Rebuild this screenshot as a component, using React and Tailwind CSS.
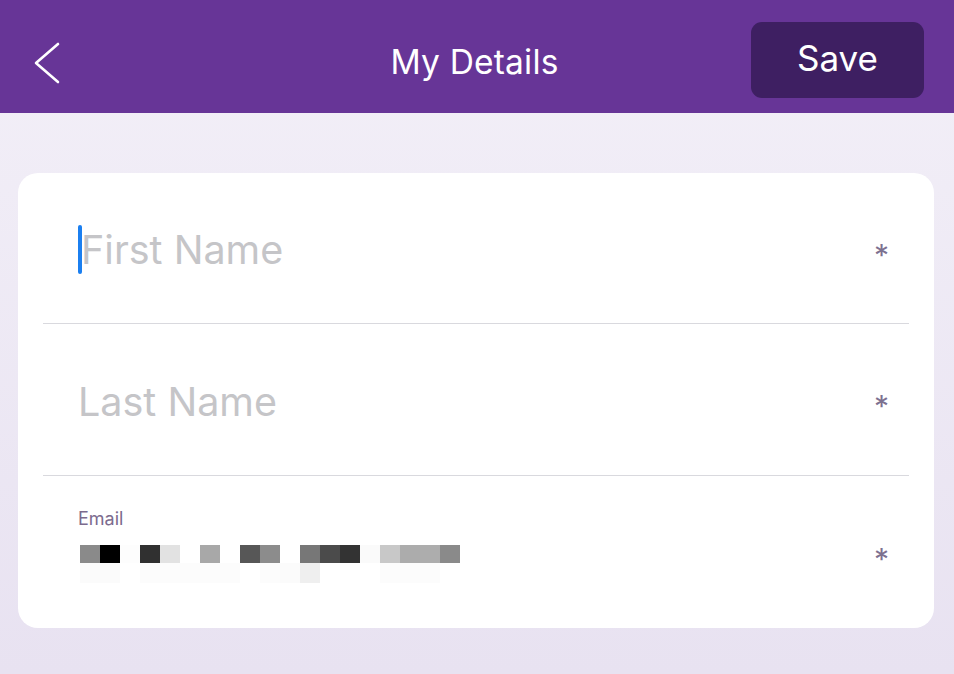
export default function App() {
  const row1 = ['#8a8a8a', '#000000', '#fdfdfd', '#303030', '#e2e2e2', '#ffffff', '#a8a8a8', '#ffffff', '#575757', '#8c8c8c', '#ffffff', '#777777', '#4b4b4b', '#333333', '#fafafa', '#c8c8c8', '#acacac', '#adadad', '#8a8a8a']
  const row2 = ['#fbfbfb', '#fbfbfb', '#ffffff', '#fcfcfc', '#fcfcfc', '#fcfcfc', '#fcfcfc', '#fcfcfc', '#ffffff', '#fcfcfc', '#fbfbfb', '#efefef', '#ffffff', '#ffffff', '#ffffff', '#fcfcfc', '#fcfcfc', '#fcfcfc', '#ffffff']

  return (
    <div className="w-[954px] h-[674px] overflow-hidden flex flex-col bg-gradient-to-b from-[#f3f0f8] to-[#e8e2f1] font-['Inter',sans-serif]">
      <header className="h-[113px] shrink-0 bg-[#673597] flex items-center justify-between pl-[32px] pr-[30px] pt-[10px]">
        <svg width="30" height="42" viewBox="0 0 30 42" className="mt-[2px]">
          <path d="M26 2 L4 21 L26 40" fill="none" stroke="#fff" strokeWidth="2.6" strokeLinecap="round" strokeLinejoin="round" />
        </svg>
        <h1 className="text-white text-[33.5px] ml-[136px] mt-[2px] tracking-[0.2px]">My Details</h1>
        <button className="w-[173px] h-[76px] mb-[3px] pb-[4px] rounded-[11px] bg-[#3e1f62] text-white text-[35px]">Save</button>
      </header>

      <div className="pl-[18px] pr-[20px] pt-[60px]">
        <div className="bg-white rounded-[20px] h-[455px] px-[25px] flex flex-col">
          <div className="h-[151px] flex items-center justify-between border-b border-[#d9d9de] pl-[35px] pr-[20px]">
            <div className="flex items-center">
              <span className="w-[4px] h-[49px] rounded-full bg-[#1b7ff0] mt-[2px]"></span>
              <span className="text-[39.5px] text-[#c5c5c8] -ml-[1px] mt-[5px]">First Name</span>
            </div>
            <span className="text-[30px] text-[#7d7190] mt-[14px]">*</span>
          </div>
          <div className="h-[152px] flex items-center justify-between border-b border-[#d9d9de] pl-[35px] pr-[20px]">
            <span className="text-[39.5px] text-[#c5c5c8] mt-[6px]">Last Name</span>
            <span className="text-[30px] text-[#7d7190] mt-[14px]">*</span>
          </div>
          <div className="flex-1 flex items-start justify-between pl-[35px] pr-[20px] pt-[31px]">
            <div className="flex flex-col">
              <span className="text-[18px] text-[#7c6b8e] leading-[24px]">Email</span>
              <div className="mt-[14px] ml-[2px] flex flex-col">
                <div className="flex">
                  {row1.map((c, i) => (
                    <span key={i} className="w-[20px] h-[18px]" style={{ background: c }}></span>
                  ))}
                </div>
                <div className="flex">
                  {row2.map((c, i) => (
                    <span key={i} className="w-[20px] h-[20px]" style={{ background: c }}></span>
                  ))}
                </div>
              </div>
            </div>
            <span className="text-[30px] text-[#7d7190] mt-[30px]">*</span>
          </div>
        </div>
      </div>
    </div>
  )
}
